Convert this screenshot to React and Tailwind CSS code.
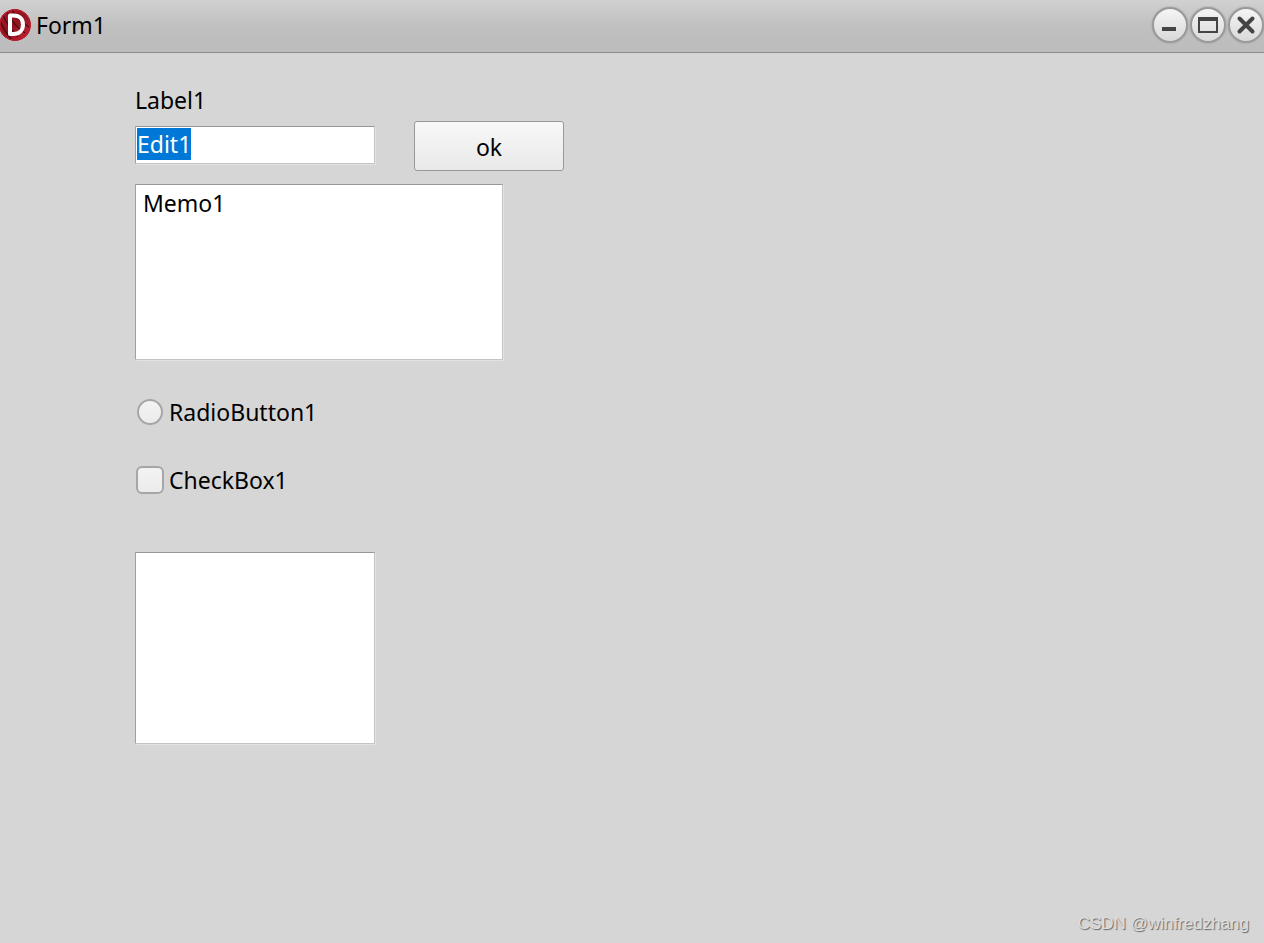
import { useEffect, useRef } from 'react';

const sunken =
  'block appearance-none rounded-[1px] border border-t-[#979797] border-l-[#a0a0a0] border-r-[#c4c4c4] border-b-[#c4c4c4] bg-white shadow-[1px_1px_0_#e2e2e2] outline-none';

const AppLogo = () => (
  <svg viewBox="0 0 32 32" className="size-8 shrink-0" aria-hidden="true">
    <defs>
      <linearGradient id="logoRed" x1="0" y1="0" x2="1" y2="1">
        <stop offset="0" stopColor="#b01524" />
        <stop offset="0.5" stopColor="#8d1420" />
        <stop offset="1" stopColor="#d3273a" />
      </linearGradient>
      <clipPath id="logoClip">
        <circle cx="15" cy="16" r="16" />
      </clipPath>
    </defs>
    <g clipPath="url(#logoClip)">
      <circle cx="15" cy="16" r="16" fill="url(#logoRed)" />
      <g fill="none" stroke="#4a0a12" strokeWidth="1.3">
        <path d="M3 6q5 12 15 22" />
        <path d="M7 3q6 13 18 21" />
        <path d="M0 11q4 11 11 19" />
        <path d="M12 1q4 9 17 17" />
      </g>
      <circle cx="15" cy="16" r="15.3" fill="none" stroke="#b51c2e" strokeWidth="1.4" />
    </g>
    <path
      d="M10 6.500H13.500c6 0 9.500 3.500 9.500 9S19.500 25 13.500 25H10z"
      fill="none"
      stroke="#fff"
      strokeWidth="4"
      strokeLinejoin="round"
    />
  </svg>
);

const CaptionButton = ({ label, children }) => (
  <button
    type="button"
    aria-label={label}
    className="flex size-9 items-center justify-center rounded-full border-2 border-[#999] bg-linear-to-b from-[#f5f5f5] to-[#d9d9d9] shadow-[0_0_2px_#999]"
  >
    <svg viewBox="0 0 24 24" className="size-6 shrink-0" aria-hidden="true">
      {children}
    </svg>
  </button>
);

const TitleBar = () => (
  <header className="flex h-[53px] items-center justify-between border-b border-[#8c8c8c] bg-linear-to-b from-[#d1d1d1] via-[#c0c0c0] to-[#bcbcbc] pb-[2px]">
    <div className="flex items-center gap-1">
      <AppLogo />
      <h1>Form1</h1>
    </div>
    <div className="flex gap-[2px]">
      <CaptionButton label="Minimize">
        <path d="M4 14h14v4H4z" fill="#444" />
      </CaptionButton>
      <CaptionButton label="Maximize">
        <path d="M2 4h20v16H2zM4 8v10h16V8z" fill="#444" fillRule="evenodd" />
      </CaptionButton>
      <CaptionButton label="Close">
        <path d="M5.500 5.500l13 13M18.500 5.500l-13 13" stroke="#444" strokeWidth="4" strokeLinecap="round" />
      </CaptionButton>
    </div>
  </header>
);

const App = () => {
  const editRef = useRef(null);

  // the first edit opens focused with its text selected
  useEffect(() => {
    editRef.current.focus();
    editRef.current.select();
  }, []);

  return (
    <div className="flex min-h-screen flex-col bg-[#d6d6d6] font-['Noto_Sans','Open_Sans',sans-serif] text-[23px] leading-8 text-black">
      <TitleBar />

      <main className="flex grow flex-col items-start pt-[31px] pl-[135px]">
        <label htmlFor="edit1">Label1</label>

        <div className="mt-[5px] flex items-start gap-[39px]">
          <input
            id="edit1"
            ref={editRef}
            type="text"
            defaultValue="Edit1"
            className={`${sunken} mt-[5px] h-[38px] w-60 px-px pb-[2px] leading-8 selection:bg-[#0078d7] selection:text-white`}
          />
          <button
            type="button"
            className="h-[50px] w-[150px] rounded-[3px] border border-[#999] bg-linear-to-b from-[#f8f8f8] to-[#e9e9e9] pt-[2px]"
          >
            ok
          </button>
        </div>

        <textarea
          aria-label="Memo"
          defaultValue="Memo1"
          className={`${sunken} mt-[13px] h-44 w-[368px] resize-none px-[7px] py-[2px]`}
        />

        <label className="mt-9 ml-px flex items-center gap-[5px]">
          <input
            type="radio"
            className="mx-px size-[26px] appearance-none rounded-full border-2 border-[#a6a6a6] bg-linear-to-b from-[#f3f3f3] to-[#ebebeb]"
          />
          RadioButton1
        </label>

        <label className="mt-9 ml-px flex items-center gap-[5px]">
          <input
            type="checkbox"
            className="size-7 appearance-none rounded-md border-2 border-[#a6a6a6] bg-linear-to-b from-[#f3f3f3] to-[#ebebeb]"
          />
          CheckBox1
        </label>

        <select size={6} aria-label="List" className={`${sunken} mt-14 h-48 w-60`} />
      </main>

      <footer className="flex justify-end pr-[15px] pb-[7px] font-['Liberation_Sans',sans-serif] text-[17px] leading-6 text-[#dedede] [text-shadow:1px_1px_1px_#666]">
        CSDN @winfredzhang
      </footer>
    </div>
  );
};

export default App;
